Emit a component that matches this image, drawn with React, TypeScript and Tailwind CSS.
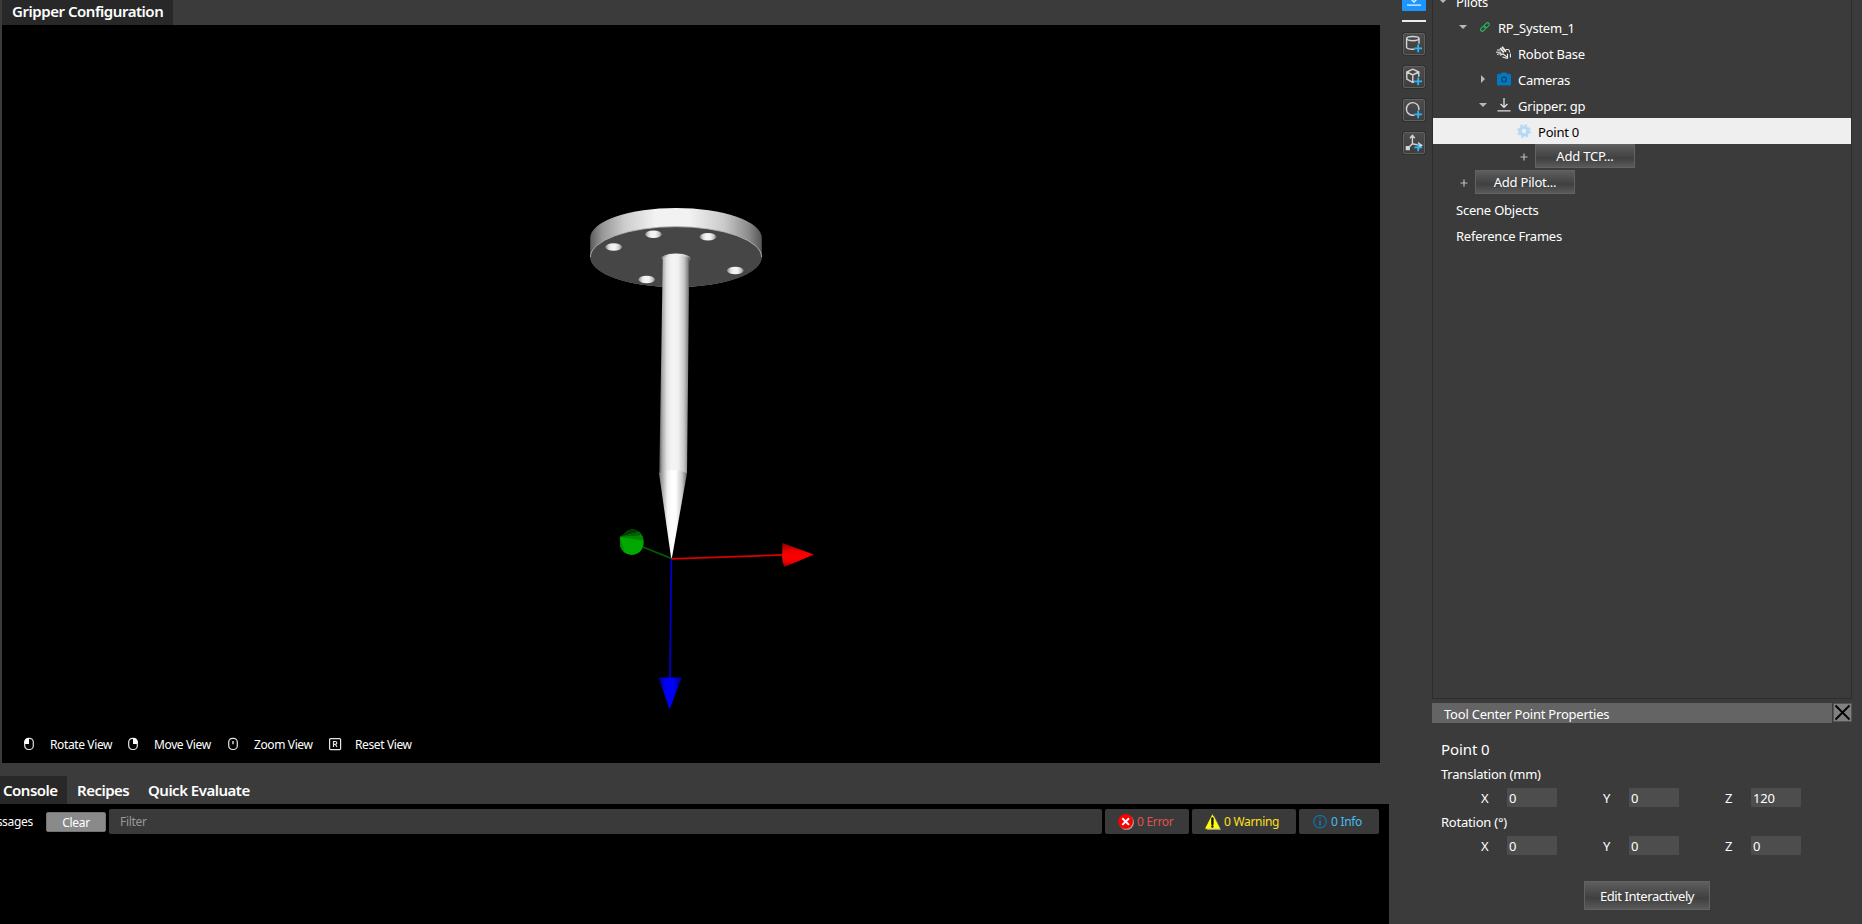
import type { ReactNode } from "react";

const HOLES = [
  [613.7, 247],
  [653.5, 234.3],
  [708, 236.8],
  [735.3, 270.5],
  [646.7, 279.5],
];

function GripperScene() {
  return (
    <svg className="block h-[738px] w-[1378px]" viewBox="2 25 1378 738">
      <defs>
        <linearGradient id="rim" gradientUnits="userSpaceOnUse" x1="590" x2="762" y1="0" y2="0">
          <stop offset="0" stopColor="#5a5a5a" />
          <stop offset="0.07" stopColor="#969696" />
          <stop offset="0.2" stopColor="#cccccc" />
          <stop offset="0.38" stopColor="#f2f2f2" />
          <stop offset="0.58" stopColor="#f2f2f2" />
          <stop offset="0.78" stopColor="#cacaca" />
          <stop offset="0.92" stopColor="#8c8c8c" />
          <stop offset="1" stopColor="#555555" />
        </linearGradient>
        <linearGradient id="steel" x1="0" x2="1" y1="0" y2="0">
          <stop offset="0" stopColor="#5c5c5c" />
          <stop offset="0.1" stopColor="#a8a8a8" />
          <stop offset="0.25" stopColor="#e2e2e2" />
          <stop offset="0.4" stopColor="#f4f4f4" />
          <stop offset="0.62" stopColor="#f2f2f2" />
          <stop offset="0.82" stopColor="#c8c8c8" />
          <stop offset="0.94" stopColor="#8a8a8a" />
          <stop offset="1" stopColor="#505050" />
        </linearGradient>
        <linearGradient id="needle" x1="0" x2="1" y1="0" y2="0">
          <stop offset="0" stopColor="#777777" />
          <stop offset="0.3" stopColor="#f0f0f0" />
          <stop offset="0.45" stopColor="#ffffff" />
          <stop offset="0.6" stopColor="#ffffff" />
          <stop offset="0.82" stopColor="#c8c8c8" />
          <stop offset="1" stopColor="#666666" />
        </linearGradient>
        <linearGradient id="red" x1="0" x2="0" y1="0" y2="1">
          <stop offset="0" stopColor="#900000" />
          <stop offset="0.35" stopColor="#ee0000" />
          <stop offset="0.6" stopColor="#ff0000" />
          <stop offset="0.8" stopColor="#e80000" />
          <stop offset="1" stopColor="#800000" />
        </linearGradient>
        <linearGradient id="blue" x1="0" x2="1" y1="0" y2="0">
          <stop offset="0" stopColor="#000080" />
          <stop offset="0.3" stopColor="#0000f0" />
          <stop offset="0.6" stopColor="#0000ff" />
          <stop offset="1" stopColor="#000090" />
        </linearGradient>
      </defs>

      <path d="M590.2 257V238A85.8 30 0 0 1 761.8 238V257A85.8 30 0 0 1 590.2 257Z" fill="url(#rim)" />
      <ellipse cx="676" cy="257" rx="85.6" ry="30.4" fill="#464646" />
      <path d="M590.4 257A85.6 30.4 0 0 1 761.6 257" fill="none" stroke="#c0c0c0" strokeWidth="0.8" />
      {HOLES.map(([x, y]) => (
        <path
          key={x}
          d={`M${x - 8.8} ${y}Q${x - 7} ${y - 3.6} ${x} ${y - 3.8}Q${x + 7} ${y - 3.6} ${x + 8.8} ${y}Q${x + 7} ${y + 3.6} ${x} ${y + 3.8}Q${x - 7} ${y + 3.6} ${x - 8.8} ${y}Z`}
          fill="url(#steel)"
        />
      ))}

      <path d="M661 258C665 252 687 252 691 258L689.4 261L661.8 259Z" fill="url(#steel)" />
      <path d="M662.8 258Q676 252 689.4 258L687 473H659.3Z" fill="url(#steel)" />
      <path d="M659 473Q673 467 687 473L671.8 558.5H671.2Z" fill="url(#needle)" />

      <path d="M671.5 558.5L643 547" stroke="#006000" strokeWidth="1.6" />
      <path d="M671.3 559L670 679" stroke="#0000c8" strokeWidth="1.8" />
      <path d="M671.5 558.8L783 554.9" stroke="#dc0000" strokeWidth="1.8" />
      <path
        d="M620 537L628 530.6Q634 527.8 639 531.8Q644.2 536 643.6 544Q642.5 552 635 554.6Q627 556 622.5 550.5Q620 547.5 620 543Z"
        fill="#00a800"
      />
      <path d="M620 537L628 530.6Q634 527.8 639 531.8Z" fill="#003c00" />
      <path d="M620 537L639 531.8L642 535.4Z" fill="#006000" />
      <path d="M620 537L642 535.4L643.6 540.6Z" fill="#008600" />
      <path d="M620 537L624.5 552.5L621.5 549Q620 547 620 543Z" fill="#008c00" />
      <path d="M782.5 543L813.8 554.5L784.5 567Q781.5 561 782.2 553Z" fill="url(#red)" />
      <path d="M658.5 677.5H681.6L670 708.4H669.2Z" fill="url(#blue)" />
    </svg>
  );
}

function Mouse({ part }: { part: "left" | "right" | "wheel" }) {
  return (
    <svg className="h-3.5 w-3 shrink-0" viewBox="0 0 12 14" fill="none">
      <rect x="1.7" y="1.3" width="8.6" height="11.2" rx="3.8" stroke="#e6e6e6" strokeWidth="1.2" />
      {part === "left" && <path d="M6 1V7H1.5V4.5Q2 1.3 6 1Z" fill="#fff" />}
      {part === "right" && <path d="M6 1V7H10.5V4.5Q10 1.3 6 1Z" fill="#fff" />}
      {part === "wheel" && <path d="M6 4V7.2" stroke="#e6e6e6" strokeWidth="1.4" />}
    </svg>
  );
}

function Hint({ icon, label, box }: { icon: ReactNode; label: string; box: string }) {
  return (
    <div className={`flex items-center ${box}`}>
      <span className="flex w-[27px] shrink-0 items-center">{icon}</span>
      <span className="whitespace-nowrap pt-[2px]">{label}</span>
    </div>
  );
}

function Arrow({ open = true }: { open?: boolean }) {
  return (
    <svg className="h-2 w-2 shrink-0" viewBox="0 0 8 8">
      <path d={open ? "M0 2H8L4 6Z" : "M2 0L6 4L2 8Z"} fill="#b8b8b8" />
    </svg>
  );
}

function ToolButton({ children }: { children: ReactNode }) {
  return (
    <button className="ml-[1px] flex h-[22px] w-[22px] items-center justify-center rounded-[2px] border border-[#606060] bg-linear-to-b from-[#4c4c4c] to-[#3e3e3e] shadow-[0_0_0_1px_#303030]">
      <svg className="h-5 w-5 shrink-0" viewBox="0 0 20 20" fill="none" stroke="#d4d4d4" strokeWidth="1.4">
        {children}
      </svg>
    </button>
  );
}

function Plus() {
  return <path d="M14.2 10.4V18.2M10.3 14.3H18.1" stroke="#2cb5f5" strokeWidth="1.8" />;
}

function Row({ pad, children, selected = false }: { pad: string; children: ReactNode; selected?: boolean }) {
  return (
    <div
      className={`flex h-[26px] shrink-0 items-center whitespace-nowrap ${pad} ${
        selected ? "bg-[#efefef] text-black" : ""
      }`}
    >
      {children}
    </div>
  );
}

function GradientButton({ children, box }: { children: ReactNode; box: string }) {
  return (
    <button
      className={`flex items-center justify-center whitespace-nowrap border border-[#626262] bg-linear-to-b from-[#5e5e5e] via-[#404040] via-60% to-[#5a5a5a] pt-[2px] ${box}`}
    >
      {children}
    </button>
  );
}

function AddMark() {
  return (
    <svg className="h-2 w-2 shrink-0" viewBox="0 0 8 8">
      <path d="M4 0.5V7.5M0.5 4H7.5" stroke="#bcbcbc" strokeWidth="1.2" />
    </svg>
  );
}

function Field({ axis, value }: { axis: string; value: string }) {
  return (
    <label className="flex h-[19px] w-[122px] items-center">
      <span className="w-[26px] pt-[2px]">{axis}</span>
      <span className="flex h-[19px] w-[50px] items-center bg-[#4d4d4d] pl-[2px] pt-[2px]">{value}</span>
    </label>
  );
}

function ViewportColumn() {
  return (
    <div className="flex w-[1389px] shrink-0 flex-col">
      <div className="flex h-[25px] pl-[2px]">
        <div className="w-[171px] whitespace-nowrap bg-[#282828] pl-[10px] text-[15px] font-semibold leading-[23px] tracking-[-0.46px]">
          Gripper Configuration
        </div>
      </div>
      <div className="relative ml-[2px] h-[738px] w-[1378px] bg-black">
        <GripperScene />
        <div className="absolute bottom-[9px] left-[21px] flex h-5 items-center text-[12px] tracking-[-0.38px]">
          <Hint box="w-[104px]" icon={<Mouse part="left" />} label="Rotate View" />
          <Hint box="w-[100px]" icon={<Mouse part="right" />} label="Move View" />
          <Hint box="w-[102px]" icon={<Mouse part="wheel" />} label="Zoom View" />
          <Hint
            box="-ml-[1px] w-[100px]"
            icon={
              <svg className="h-3.5 w-3.5" viewBox="0 0 14 14" fill="none" stroke="#e6e6e6">
                <rect x="1.6" y="1.6" width="11" height="11" rx="1" strokeWidth="1.2" />
                <path d="M5.5 10V4.5H7.3Q8.8 4.6 8.8 6Q8.8 7.3 7.3 7.3H5.5M7.3 7.3L9 10" strokeWidth="1.2" />
              </svg>
            }
            label="Reset View"
          />
        </div>
      </div>
      <div className="mt-[13px] flex h-7 text-[15px] font-semibold leading-[28px] tracking-[-0.5px]">
        <div className="w-[67px] bg-[#282828] pl-[3px]">Console</div>
        <div className="w-[71px] pl-[10px]">Recipes</div>
        <div className="pl-[10px]">Quick Evaluate</div>
      </div>
      <div className="flex-1 bg-black pt-[5px]">
        <div className="flex h-[25px] items-center text-[12px] tracking-[-0.3px]">
          <div className="flex w-[33px] justify-end overflow-hidden">Messages</div>
          <button className="ml-[13px] h-5 w-[60px] rounded-[2px] border border-[#737373] bg-[#8a8a8a]">
            <span className="block leading-[19px]">Clear</span>
          </button>
          <div className="ml-[3px] h-[25px] w-[993px] rounded-[2px] bg-[#3a3a3a] pl-[11px] leading-[25px] text-[#999]">Filter</div>
          <div className="ml-[3px] flex h-[25px] w-[84px] items-center rounded-[2px] bg-[#3a3a3a] pl-[13px] text-[#e0524f]">
            <svg className="mr-[3px] h-4 w-4 shrink-0" viewBox="0 0 16 16">
              <circle cx="8.5" cy="8.4" r="7.4" fill="#aaa" />
              <circle cx="7.6" cy="7.4" r="7.4" fill="#fa0000" />
              <path d="M4.3 4.2L11 10.9M11 4.2L4.3 10.9" stroke="#fff" strokeWidth="2" />
            </svg>
            0 Error
          </div>
          <div className="ml-[3px] flex h-[25px] w-[104px] items-center rounded-[2px] bg-[#3a3a3a] pl-[13px] text-[#ffe11a]">
            <svg className="mr-[3px] h-4 w-4 shrink-0" viewBox="0 0 16 16">
              <path d="M9 1.5L16 16H1.5Z" fill="#999" />
              <path d="M7.4 0.3L15 14.8H0Z" fill="#ffff00" />
              <path d="M7.4 4.5V10" stroke="#111" strokeWidth="2.4" strokeLinecap="round" />
              <circle cx="7.4" cy="12.5" r="1.2" fill="#111" />
            </svg>
            0 Warning
          </div>
          <div className="ml-[3px] flex h-[25px] w-[80px] items-center rounded-[2px] bg-[#3a3a3a] pl-[13px] text-[#42bdf5]">
            <svg className="mr-[3px] h-4 w-4 shrink-0" viewBox="0 0 16 16" fill="none" stroke="#0d74ad">
              <circle cx="8" cy="7.6" r="6.3" strokeWidth="1.2" />
              <path d="M8 6.4V11.4M8 3.4V5.1" strokeWidth="1.7" />
            </svg>
            0 Info
          </div>
        </div>
      </div>
    </div>
  );
}

function Toolbar() {
  return (
    <div className="flex w-[43px] shrink-0 flex-col items-start pl-[13px]">
      <div className="flex h-[11px] w-6 justify-center rounded-b-[1px] bg-[#1a96fc]">
        <svg className="h-[11px] w-6" viewBox="0 0 24 11" fill="none" stroke="#e8f4ff" strokeWidth="1.3">
          <path d="M8.5 -1.5L12 2L15.5 -1.5M5 5.2H19" />
        </svg>
      </div>
      <div className="mt-[9px] h-[2px] w-6 bg-[#ededed]" />
      <div className="mt-[11px] flex flex-col gap-[11px]">
        <ToolButton>
          <ellipse cx="8.8" cy="4.6" rx="6.2" ry="2.1" />
          <path d="M2.6 4.6V13.4Q3 15.2 8.8 15.2H10.5M15 4.6V9.8" />
          <Plus />
        </ToolButton>
        <ToolButton>
          <path d="M8.8 2.2L14.8 5V9.8M8.8 2.2L2.8 5V12.2L8.8 15.4L10.3 14.6M2.8 5L8.8 8L14.8 5M8.8 8V15.4" />
          <Plus />
        </ToolButton>
        <ToolButton>
          <path d="M14.9 10A6.3 6.3 0 1 0 10.4 15" />
          <Plus />
        </ToolButton>
        <ToolButton>
          <path d="M8.4 3V10.8L3.4 15.8M8.4 10.8L16 12.4M6 5.2L8.4 2.4L10.8 5.2" />
          <path d="M2.4 13.6H5.2V16.6H2.4ZM14.8 10.2L17.8 12.4L15.2 14.6Z" fill="#d9d9d9" />
          <Plus />
        </ToolButton>
      </div>
    </div>
  );
}

function SceneTree() {
  return (
    <div className="flex h-[699px] w-[420px] flex-col overflow-hidden border-b border-l border-r border-[#2d2d2d] text-[13px] tracking-[-0.22px]">
      <div className="-mt-[12px] flex flex-col">
        <Row pad="pl-[6px]">
          <Arrow />
          <span className="ml-[9px] pt-[4px]">Pilots</span>
        </Row>
        <Row pad="pl-[26px]">
          <Arrow />
          <svg className="ml-[13px] h-[10px] w-[10px] shrink-0" viewBox="0 0 10 10" fill="none" stroke="#2cb45c" strokeWidth="1.1">
            <rect x="-2.9" y="-1.7" width="5.8" height="3.4" rx="1.7" transform="translate(3.1 6.7) rotate(-45)" />
            <rect x="-2.9" y="-1.7" width="5.8" height="3.4" rx="1.7" transform="translate(6.7 3.3) rotate(-45)" />
          </svg>
          <span className="ml-[8px] pt-[4px]">RP_System_1</span>
        </Row>
        <Row pad="pl-[63px]">
          <svg className="h-4 w-4 shrink-0" viewBox="0 0 16 16" fill="none" stroke="#f0f0f0">
            <path d="M6 1.8L10 6.6M4.3 3L7.8 7.6" strokeWidth="1.7" />
            <path d="M9.8 4.5H12.8L13.8 7.5M1 5H4.5M0 7.2H5M1 9.4L5.5 8.4" strokeWidth="1" />
            <path d="M4 10.3L7 9L11.5 12.4M6.5 12L11.5 13.6M11.5 8.8V13.4M14.4 8.5V12.5" strokeWidth="1.1" />
          </svg>
          <span className="ml-[6px] pt-[4px]">Robot Base</span>
        </Row>
        <Row pad="pl-[46px]">
          <Arrow open={false} />
          <svg className="ml-[10px] h-[14px] w-[14px] shrink-0" viewBox="0 0 14 14">
            <path d="M1 2H3.5L4.7 0.5H9.3L10.5 2H13Q14 2 14 3V12.5Q14 13.5 13 13.5H1Q0 13.5 0 12.5V3Q0 2 1 2Z" fill="#0078c2" />
            <circle cx="7" cy="7.6" r="2.4" fill="none" stroke="#1e3f58" strokeWidth="1.2" />
          </svg>
          <span className="ml-[7px] pt-[4px]">Cameras</span>
        </Row>
        <Row pad="pl-[46px]">
          <Arrow />
          <svg className="ml-[10px] h-[14px] w-[14px] shrink-0" viewBox="0 0 14 14" fill="none" stroke="#e0e0e0" strokeWidth="1.3">
            <path d="M7 0V9M3.6 6L7 9.3L10.4 6M0.5 12.8H13.5" />
          </svg>
          <span className="ml-[7px] pt-[4px]">Gripper: gp</span>
        </Row>
        <Row pad="pl-[84px]" selected>
          <svg className="h-[14px] w-[14px] shrink-0" viewBox="0 0 14 14" fill="none" stroke="#b4d9f7">
            <circle cx="7" cy="7" r="3.8" strokeWidth="3" />
            <circle cx="7" cy="7" r="5.9" strokeWidth="2" strokeDasharray="2.5 2.134" />
          </svg>
          <span className="ml-[7px] pt-[4px]">Point 0</span>
        </Row>
        <div className="flex h-[26px] items-start pl-[87px]">
          <span className="mt-[9px] flex">
            <AddMark />
          </span>
          <GradientButton box="ml-[7px] h-6 w-[100px]">Add TCP...</GradientButton>
        </div>
        <div className="flex h-[26px] items-start pl-[27px]">
          <span className="mt-[9px] flex">
            <AddMark />
          </span>
          <GradientButton box="ml-[7px] h-6 w-[100px]">Add Pilot...</GradientButton>
        </div>
        <Row pad="pl-[23px]">
          <span className="pt-[4px]">Scene Objects</span>
        </Row>
        <Row pad="pl-[23px]">
          <span className="pt-[4px]">Reference Frames</span>
        </Row>
      </div>
    </div>
  );
}

function Properties() {
  return (
    <div className="mt-1 flex flex-col text-[13px] tracking-[-0.22px]">
      <div className="flex h-5">
        <div className="w-[400px] bg-[#646464] pl-3 leading-[22px]">Tool Center Point Properties</div>
        <button className="ml-[1px] flex h-[19px] w-[19px] items-center justify-center border border-[#555] bg-[#808080]">
          <svg className="h-[17px] w-[17px]" viewBox="0 0 17 17" stroke="#000" strokeWidth="1.8">
            <path d="M1.5 1.5L15.5 15.5M15.5 1.5L1.5 15.5" />
          </svg>
        </button>
      </div>
      <div className="mt-[15px] h-[22px] pl-[9px] text-[15px] leading-[22px] tracking-[-0.1px]">Point 0</div>
      <div className="mt-[4px] h-5 pl-[9px] leading-5">Translation (mm)</div>
      <div className="mt-[4px] flex pl-[49px]">
        <Field axis="X" value="0" />
        <Field axis="Y" value="0" />
        <Field axis="Z" value="120" />
      </div>
      <div className="mt-[5px] h-5 pl-[9px] leading-5">Rotation (°)</div>
      <div className="mt-[4px] flex pl-[49px]">
        <Field axis="X" value="0" />
        <Field axis="Y" value="0" />
        <Field axis="Z" value="0" />
      </div>
      <div className="mt-[26px] flex pl-[152px]">
        <GradientButton box="h-[29px] w-[126px] tracking-[-0.42px]">Edit Interactively</GradientButton>
      </div>
    </div>
  );
}

export default function App() {
  return (
    <div className="flex h-[924px] w-[1862px] overflow-hidden bg-[#3b3b3b] font-['Noto_Sans','Open_Sans',sans-serif] text-white">
      <ViewportColumn />
      <Toolbar />
      <div className="flex w-[430px] shrink-0 flex-col">
        <SceneTree />
        <Properties />
      </div>
    </div>
  );
}
